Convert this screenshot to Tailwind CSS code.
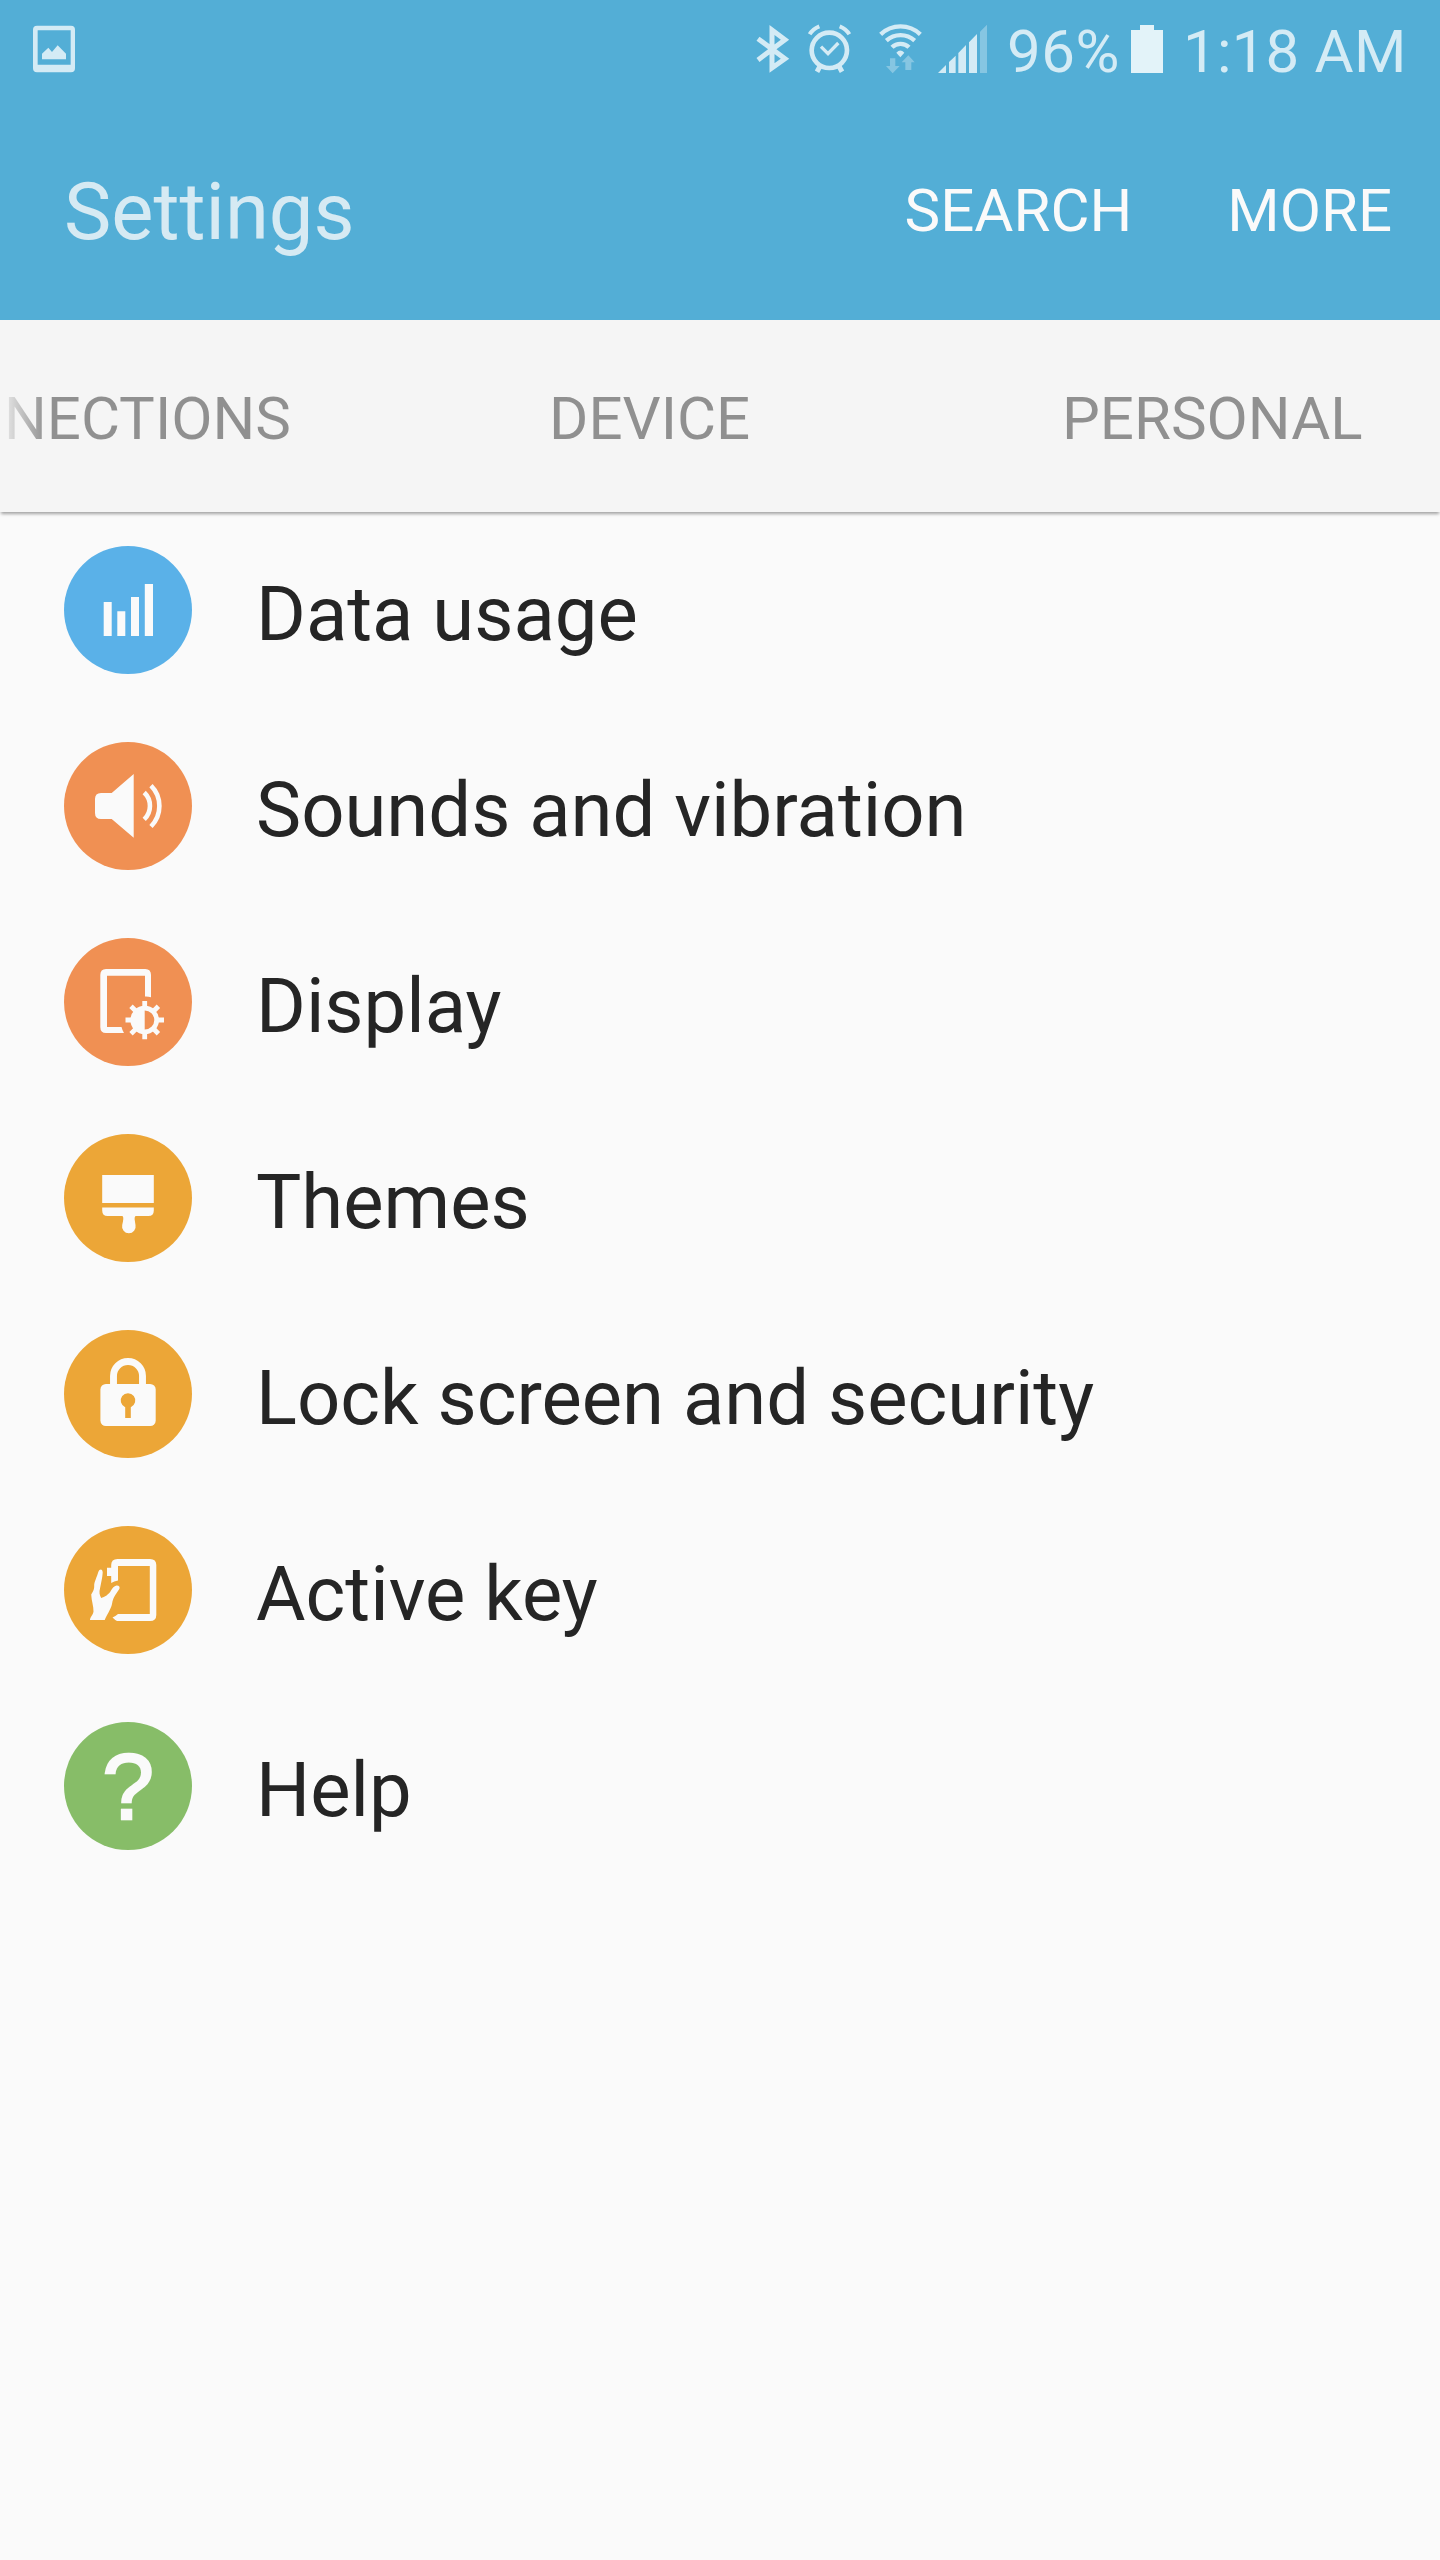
<!DOCTYPE html>
<html lang="en">
<head>
<meta charset="utf-8">
<title>Settings</title>
<script src="https://cdn.jsdelivr.net/npm/@tailwindcss/browser@4"></script>
</head>
<body class="w-[1440px] h-[2560px] overflow-hidden bg-[#fafafa] font-[Roboto,sans-serif] text-[#252525]">
<header class="h-80 bg-[#53aed6]">
  <div class="flex h-[103px] items-center text-[60px] leading-none text-[#d4ebf5]">
    <svg class="ml-8 mt-[-5px] h-[50px] w-11 shrink-0" viewBox="96 72 132 150" fill="currentColor">
      <path fill-rule="evenodd" d="M111 77H213Q225 77 225 89V205Q225 217 213 217H111Q99 217 99 205V89Q99 77 111 77ZM113 91V194H212V91Z"/>
      <path d="M126 178V161L145 143L156 156L173 136L198 161V178Z"/>
    </svg>
    <svg class="ml-[680px] mt-[-5px] h-[50px] w-[34px] shrink-0" viewBox="48 72 102 150" fill="none" stroke="currentColor" stroke-width="15">
      <path d="M54 116L135 176L96 204V90L135 119L54 180"/>
    </svg>
    <svg class="ml-[17px] mt-[-5px] h-[50px] w-[45px] shrink-0" viewBox="201 72 135 150" fill="none" stroke="currentColor">
      <circle cx="268" cy="151" r="53" stroke-width="14"/>
      <path stroke-width="10" d="M243 140L264 161L295 129"/>
      <path stroke-width="15" d="M240 199L231 215M297 199L306 215"/>
      <path stroke-width="12" d="M209 103Q218 87 238 79M328 103Q319 87 299 79"/>
    </svg>
    <svg class="ml-[26px] mt-[-5px] h-[50px] w-[45px] shrink-0" viewBox="414 72 135 150" fill="none" stroke="currentColor" stroke-width="13">
      <path d="M422 103A86 86 0 0 1 541 103M439 122A63 63 0 0 1 524 122M456 142A36 36 0 0 1 507 142"/>
      <path fill="currentColor" stroke="none" d="M469 158Q481 145 493 158L481 172Z"/>
      <path fill="currentColor" stroke="none" opacity=".4" d="M450 175H466V198H479L458 220L438 198H450ZM505 166L524 187H514V210H496V187H485Z"/>
    </svg>
    <svg class="ml-3.5 mt-[-5px] h-[50px] w-[51px] shrink-0" viewBox="591 72 153 150" fill="currentColor">
      <path d="M594 219L618 195V219ZM627 219V186L647 167V219ZM655 219V159L678 135V219ZM687 219V127L711 102V219Z"/>
      <path opacity=".4" d="M720 219V95L741 74V219Z"/>
    </svg>
    <span class="ml-[19px] w-[123px] tracking-[0.5px]">96%</span>
    <svg class="mt-[-5px] h-[50px] w-[34px] shrink-0 text-[#e3f3f9]" viewBox="150 72 102 150" fill="currentColor">
      <path d="M180 75H222V90H249V219H153V90H180Z"/>
    </svg>
    <span class="ml-[19px] whitespace-nowrap tracking-[0.2px]">1:18 AM</span>
  </div>
  <div class="flex h-[217px] items-center pl-16 pr-12 text-[60px] leading-none text-[#fafafa]">
    <h1 class="mr-auto text-[79.6px] leading-none text-[#d6eaf3]">Settings</h1>
    <span class="pb-0.5">SEARCH</span>
    <span class="ml-[95px] pb-0.5">MORE</span>
  </div>
</header>
<nav class="relative flex h-48 items-center bg-[#f5f5f5] pl-1 pt-[5px] text-[60px] leading-none text-[#909090] shadow-[0_3px_3px_-1px_rgba(0,0,0,0.35)]">
  <span class="w-[545px] bg-linear-to-r from-[#e8e8e8] to-[#909090] to-[42px] bg-clip-text text-transparent">NECTIONS</span>
  <span class="w-[513px]">DEVICE</span>
  <span>PERSONAL</span>
</nav>
<main class="text-[76px] leading-none">
  <div class="flex h-49 items-center pl-16">
    <svg class="mr-16 size-32" viewBox="0 0 128 128" fill="#fafafa"><circle cx="64" cy="64" r="64" fill="#5ab1e8"/>
      <path d="M39.7 56h8v34h-8zM53.3 65.3h8V90h-8zM67 51h8v39h-8zM80.8 38H89v52h-8.2z"/></svg>
    <span class="pt-2">Data usage</span>
  </div>
  <div class="flex h-49 items-center pl-16">
    <svg class="mr-16 size-32" viewBox="0 0 128 128" fill="#fafafa"><circle cx="64" cy="64" r="64" fill="#f09053"/>
      <path d="M37 51H47.7L69.7 32V95.8L47.7 77H37Q31 77 31 71V57Q31 51 37 51Z"/>
      <path fill="none" stroke="#fafafa" stroke-width="4.6" d="M80.2 50.5A18.5 18.5 0 0 1 80.2 77.3M87 43.7A29 29 0 0 1 87 84.5"/></svg>
    <span class="pt-2">Sounds and vibration</span>
  </div>
  <div class="flex h-49 items-center pl-16">
    <svg class="mr-16 size-32" viewBox="0 0 128 128" fill="#fafafa"><circle cx="64" cy="64" r="64" fill="#f09053"/>
      <path d="M42 31H81.3Q87 31 87 37V59.3Q84 58.3 81 58.5V37.7H43V89H57.5Q58.3 92.3 60 95H42Q36.3 95 36.3 89V37Q36.3 31 42 31Z"/>
      <path fill="none" stroke="#fafafa" stroke-width="4.8" d="M80.7 63V70M80.7 94V101.2M61.5 82H69M92 82H100M67 68.3L72.5 73.8M89 90.3L94.4 95.7M67 95.7L72.5 90.3M89 73.8L94.4 68.3"/>
      <path fill-rule="evenodd" d="M80.7 67.7A14.3 14.3 0 1 1 80.7 96.3A14.3 14.3 0 1 1 80.7 67.7ZM80.7 72.4V91.6A9.6 9.6 0 0 0 80.7 72.4Z"/></svg>
    <span class="pt-2">Display</span>
  </div>
  <div class="flex h-49 items-center pl-16">
    <svg class="mr-16 size-32" viewBox="0 0 128 128" fill="#fafafa"><circle cx="64" cy="64" r="64" fill="#eca637"/>
      <path d="M38.2 41H89.8V69H38.2ZM38.2 73.6H89.8V76.5Q89.8 82 84.3 82H71.5Q70.5 83 70.6 85Q71 88 71.5 91A6.8 6.8 0 1 1 58.2 91Q59 88 59.3 85Q59.5 83 58.5 82H43.7Q38.2 82 38.2 76.5Z"/></svg>
    <span class="pt-2">Themes</span>
  </div>
  <div class="flex h-49 items-center pl-16">
    <svg class="mr-16 size-32" viewBox="0 0 128 128" fill="#fafafa"><circle cx="64" cy="64" r="64" fill="#eca637"/>
      <path fill="none" stroke="#fafafa" stroke-width="6.9" d="M49.5 56V46A14.5 14.5 0 0 1 78.5 46V56"/>
      <rect x="36.4" y="54" width="55.3" height="42" rx="5.5"/>
      <path fill="#eca637" d="M61.2 77.2A7.3 7.3 0 1 1 66.8 77.2V88H61.2Z"/></svg>
    <span class="pt-2">Lock screen and security</span>
  </div>
  <div class="flex h-49 items-center pl-16">
    <svg class="mr-16 size-32" viewBox="0 0 128 128" fill="#fafafa"><circle cx="64" cy="64" r="64" fill="#eca637"/>
      <path d="M53.5 33H86Q92.3 33 92.3 39V89Q92.3 95 86 95H53Q51 94 48.5 91.5Q51.5 90 54 88H85.8V40H54V54.5Q50 55 47.2 57V50H43V41.7H47.2V39Q47.2 33 53.5 33Z"/>
      <path d="M26 94H40.7C42.5 89.5 47 83 48 78C48.5 74 50 71 51.3 69L55.3 63C56.3 61 55 59.3 52.5 59.5C50 60 48.5 62 47 64.5C45 68.5 40.5 71 37.2 72C35.5 69 35 66 36 62.5C37 57.5 38.5 51 38.7 46.5C38.7 42.8 35.5 42.5 34.3 46C33 51 30 56 30.2 60C30.3 63 29.5 65 27.2 68.5C27.5 75 29.7 80 29.5 85.5C29 89 26 91 26 94Z"/></svg>
    <span class="pt-2">Active key</span>
  </div>
  <div class="flex h-49 items-center pl-16">
    <svg class="mr-16 size-32" viewBox="0 0 128 128" fill="#fafafa"><circle cx="64" cy="64" r="64" fill="#87bd68"/>
      <text x="64" y="96.8" text-anchor="middle" font-family="Liberation Sans" font-size="93" stroke="#fafafa" stroke-width="2.5">?</text></svg>
    <span class="pt-2">Help</span>
  </div>
</main>
</body>
</html>
